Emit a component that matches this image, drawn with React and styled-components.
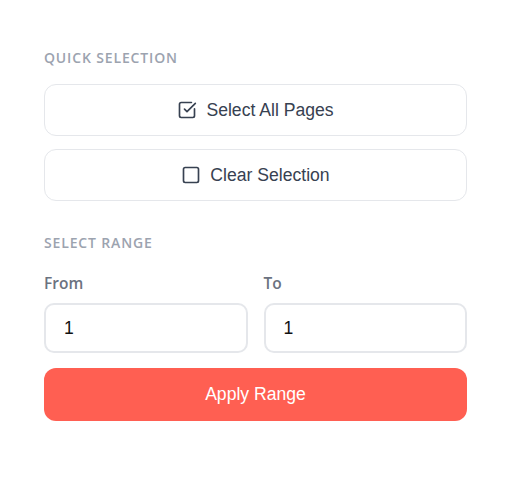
import React, { useState } from "react";
import styled, { createGlobalStyle } from "styled-components";
import { SquareCheckBig, Square } from "lucide-react";

const Global = createGlobalStyle`
  html, body { margin: 0; padding: 0; background: #ffffff; }
  * { box-sizing: border-box; }
`;

const Panel = styled.div`
  width: 511px;
  padding: 48px 44px 40px;
  display: flex;
  flex-direction: column;
`;

const SectionTitle = styled.div`
  font-family: "Open Sans", "Noto Sans", sans-serif;
  font-weight: 600;
  font-size: 14px;
  letter-spacing: 0.85px;
  text-transform: uppercase;
  color: #9ca3af;
  line-height: 20px;
  margin-bottom: ${(p) => p.$gap || 16}px;
`;

const Stack = styled.div`
  display: flex;
  flex-direction: column;
  gap: 13px;
  margin-bottom: 32px;
`;

const OptionButton = styled.button`
  height: 52px;
  width: 100%;
  background: #ffffff;
  border: 1px solid #e5e7eb;
  border-radius: 12px;
  display: flex;
  align-items: center;
  justify-content: center;
  gap: 9px;
  font-family: "Liberation Sans", Arial, sans-serif;
  font-size: 17.6px;
  color: #374151;
  cursor: pointer;
  svg { color: #374151; }
`;

const Row = styled.div`
  display: grid;
  grid-template-columns: 1fr 1fr;
  gap: 16px;
  margin-bottom: 15px;
`;

const Field = styled.div`
  display: flex;
  flex-direction: column;
  gap: 10px;
`;

const Label = styled.label`
  font-family: "Open Sans", "Noto Sans", sans-serif;
  font-weight: 600;
  font-size: 15.5px;
  color: #6b7280;
  line-height: 20px;
`;

const Input = styled.input`
  height: 50px;
  width: 100%;
  border: 2px solid #e5e7eb;
  border-radius: 10px;
  padding: 0 18px;
  font-family: "Liberation Sans", Arial, sans-serif;
  font-size: 17.6px;
  color: #111111;
  background: #fff;
  outline: none;
`;

const PrimaryButton = styled.button`
  height: 53px;
  width: 100%;
  border: none;
  border-radius: 12px;
  background: #ff5f52;
  color: #ffffff;
  font-family: "Liberation Sans", Arial, sans-serif;
  font-size: 17.6px;
  cursor: pointer;
`;

export default function App() {
  const [from, setFrom] = useState("1");
  const [to, setTo] = useState("1");
  return (
    <>
      <Global />
      <Panel>
        <SectionTitle $gap={16}>Quick Selection</SectionTitle>
        <Stack>
          <OptionButton>
            <SquareCheckBig size={20} strokeWidth={2} />
            Select All Pages
          </OptionButton>
          <OptionButton>
            <Square size={20} strokeWidth={2} />
            Clear Selection
          </OptionButton>
        </Stack>
        <SectionTitle $gap={20}>Select Range</SectionTitle>
        <Row>
          <Field>
            <Label>From</Label>
            <Input value={from} onChange={(e) => setFrom(e.target.value)} />
          </Field>
          <Field>
            <Label>To</Label>
            <Input value={to} onChange={(e) => setTo(e.target.value)} />
          </Field>
        </Row>
        <PrimaryButton>Apply Range</PrimaryButton>
      </Panel>
    </>
  );
}
